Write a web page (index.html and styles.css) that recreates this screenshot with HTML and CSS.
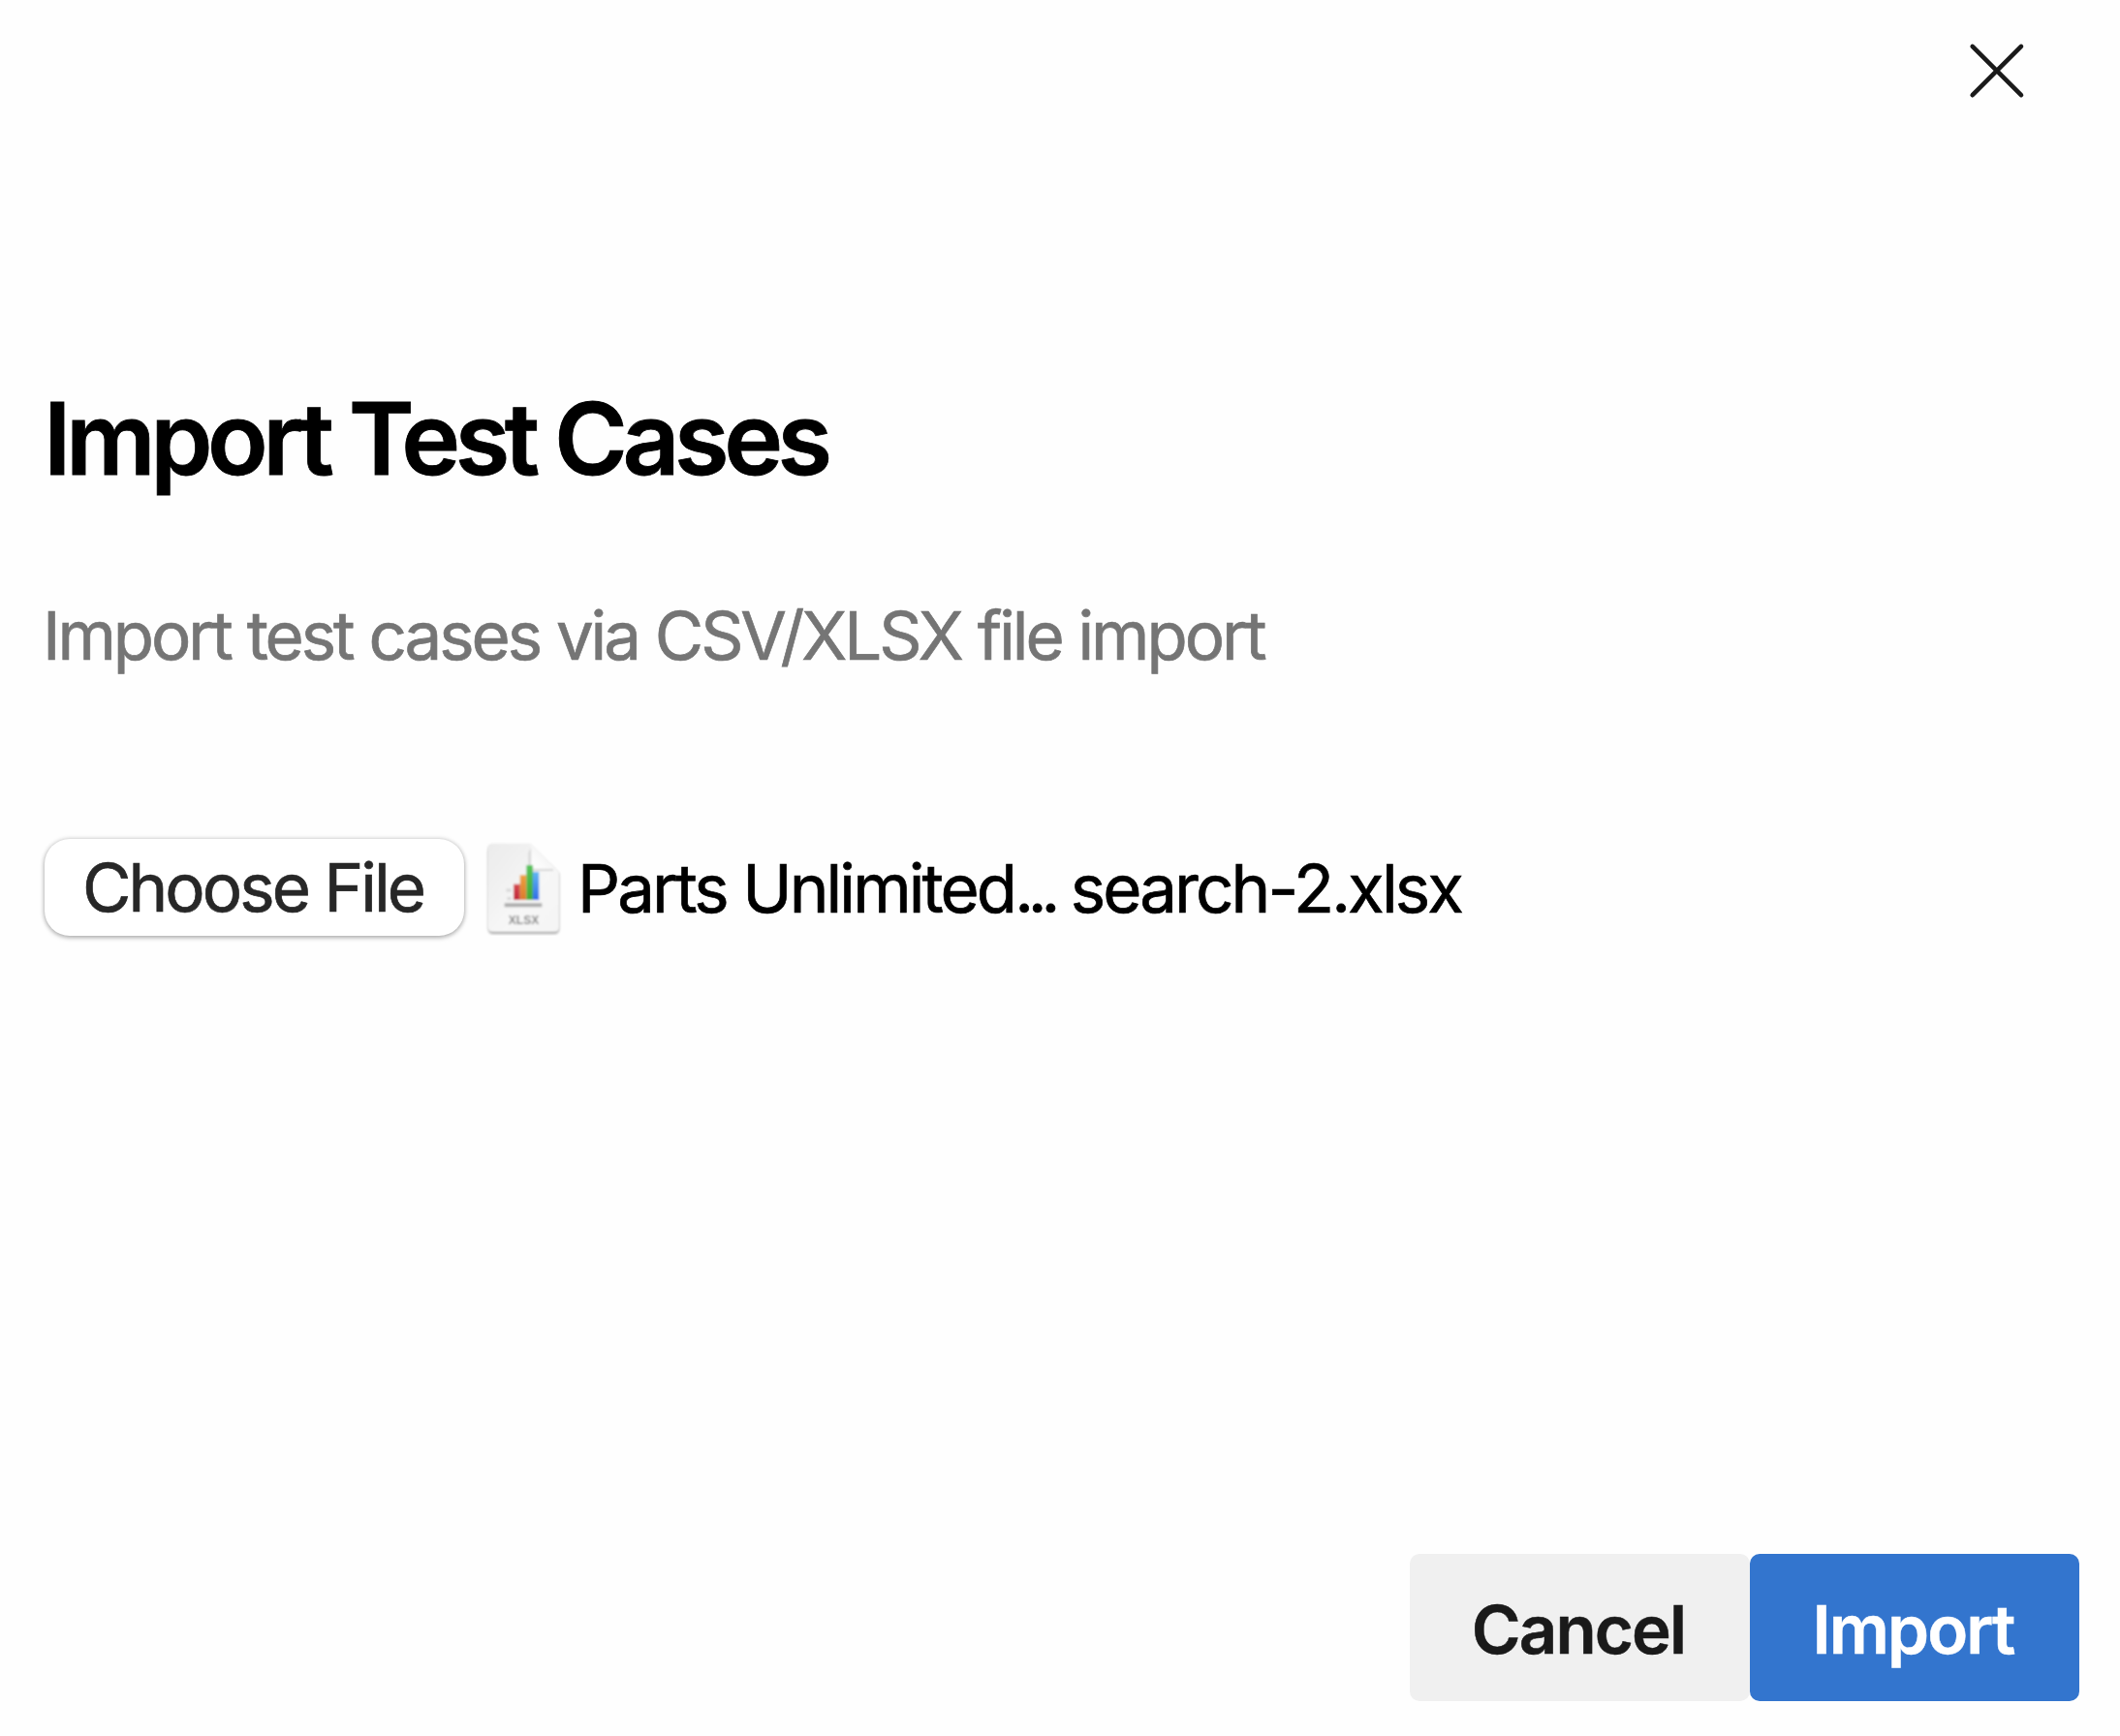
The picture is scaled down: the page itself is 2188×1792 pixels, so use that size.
FILE: index.html
```
<!DOCTYPE html>
<html lang="en">
<head>
<meta charset="utf-8">
<title>Import Test Cases</title>
<link rel="stylesheet" href="styles.css">
</head>
<body>
<main class="dialog">
  <header class="dialog-header">
    <button class="close" aria-label="Close">
      <svg width="60" height="60" viewBox="0 0 60 60"><path d="M4.700 4.900 55 55.200M55 4.900 4.700 55.200"/></svg>
    </button>
  </header>
  <h1 class="title">Import Test Cases</h1>
  <p class="subtitle">Import test cases via CSV/XLSX file import</p>
  <div class="file-row">
    <button class="choose">Choose File</button>
    <svg class="file-icon" width="84" height="100" viewBox="0 0 84 100">
      <defs>
        <linearGradient id="page" x1="0" y1="0" x2="1" y2="1"><stop offset="0" stop-color="#ebebeb"/><stop offset=".6" stop-color="#f7f7f7"/><stop offset="1" stop-color="#f4f4f4"/></linearGradient>
        <linearGradient id="fold" x1="0" y1="1" x2=".6" y2=".4"><stop offset="0" stop-color="#fff"/><stop offset="1" stop-color="#f4f4f4"/></linearGradient>
        <linearGradient id="red" x1="0" y1="0" x2="0" y2="1"><stop offset="0" stop-color="#d44a50"/><stop offset="1" stop-color="#c2273a"/></linearGradient>
        <linearGradient id="orange" x1="0" y1="0" x2="0" y2="1"><stop offset="0" stop-color="#eda03f"/><stop offset="1" stop-color="#dd7a2c"/></linearGradient>
        <linearGradient id="green" x1="0" y1="0" x2="0" y2="1"><stop offset="0" stop-color="#56c45c"/><stop offset="1" stop-color="#43a832"/></linearGradient>
        <linearGradient id="blue" x1="0" y1="0" x2="0" y2="1"><stop offset="0" stop-color="#62b8f2"/><stop offset="1" stop-color="#2f6be6"/></linearGradient>
        <filter id="soft" x="-20%" y="-20%" width="140%" height="140%"><feGaussianBlur stdDeviation="1.500"/></filter>
        <filter id="smooth" x="-10%" y="-10%" width="120%" height="120%"><feGaussianBlur stdDeviation=".8"/></filter>
      </defs>
      <path d="M10 8H48L78 36V93Q78 98 73 98H10Q5 98 5 93V13Q5 8 10 8Z" fill="#000" opacity=".34" filter="url(#soft)"/>
      <g filter="url(#smooth)">
        <path d="M10 4.700H49L78.500 34V91Q78.500 96 73 96H10Q4 96 4 91V10Q4 4.700 10 4.700Z" fill="url(#page)"/>
        <path d="M46.500 14 49.500 8V30L72 31V33H49Q46.500 33 46.500 29Z" fill="#d6d6d6"/>
        <path d="M49 5 75 31H54Q49 31 49 26Z" fill="url(#fold)"/>
        <path d="M23.500 53h5M24.500 61.500h4" stroke="#d6d6d6" stroke-width="3"/>
        <path d="M31 46.700h6.700V63H31z" fill="url(#red)"/>
        <path d="M37.700 37.300h6.600V63h-6.600z" fill="url(#orange)"/>
        <path d="M44.300 27H51v36h-6.700z" fill="url(#green)"/>
        <path d="M51 34h6.300v29H51z" fill="url(#blue)"/>
        <path d="M21.700 66.200h38.600v4H21.700z" fill="#acacac"/>
        <text x="41.500" y="88.200" text-anchor="middle" class="ext">XLSX</text>
      </g>
    </svg>
    <span class="file-name">Parts Unlimited<span class="dots">...</span> search-2.xlsx</span>
  </div>
  <footer class="actions">
    <button class="btn cancel">Cancel</button>
    <button class="btn import">Import</button>
  </footer>
</main>
</body>
</html>
```
FILE: styles.css
```
* { box-sizing: border-box; }
body { margin: 0; background: #fefefe; color: #000; font-family: Inter, "Liberation Sans", sans-serif; }
button { border: 0; padding: 0; font: inherit; color: inherit; background: none; }
.dialog { display: flex; flex-direction: column; height: 1792px; padding: 43px 42px 36px 46px; }
.dialog-header { display: flex; justify-content: flex-end; height: 60px; padding-right: 55px; }
.close { display: flex; }
.close path { fill: none; stroke: #1a1a1a; stroke-width: 4.6; stroke-linecap: round; }
.title { margin: 290px 0 0 -1px; font-size: 103px; line-height: 120px; font-weight: 600; letter-spacing: -5.5px; -webkit-text-stroke: .8px; white-space: nowrap; }
.subtitle { margin: 101px 0 0 -2px; font-size: 69px; line-height: 84px; color: #757575; letter-spacing: -3.06px; word-spacing: .5px; -webkit-text-stroke: .7px; white-space: nowrap; }
.file-row { display: flex; align-items: center; height: 100px; margin-top: 168px; font-size: 69px; line-height: 100px; -webkit-text-stroke: .7px; white-space: nowrap; }
.choose { width: 433px; height: 100px; padding-right: 3px; border-radius: 26px; background: #fff; color: #272727; letter-spacing: -2.95px; box-shadow: 0 0 5px rgba(0,0,0,.18), 0 2px 5px rgba(0,0,0,.26); }
.file-icon { flex: none; margin-left: 20px; -webkit-text-stroke: 0; }
.ext { font-family: "Liberation Sans", sans-serif; font-size: 12px; font-weight: 700; fill: #858585; }
.file-name { padding-top: 2px; margin-left: 13px; letter-spacing: -2.9px; }
.dots { letter-spacing: -6.2px; }
.actions { display: flex; justify-content: flex-end; margin-top: auto; font-size: 69px; font-weight: 600; -webkit-text-stroke: .5px; }
.btn { height: 152px; padding: 4px 3px 0 0; border-radius: 10px; letter-spacing: -1.9px; }
.cancel { width: 351px; background: #f0f0f0; color: #1a1a1a; }
.import { width: 340px; background: #3375ce; color: #fff; }
```
